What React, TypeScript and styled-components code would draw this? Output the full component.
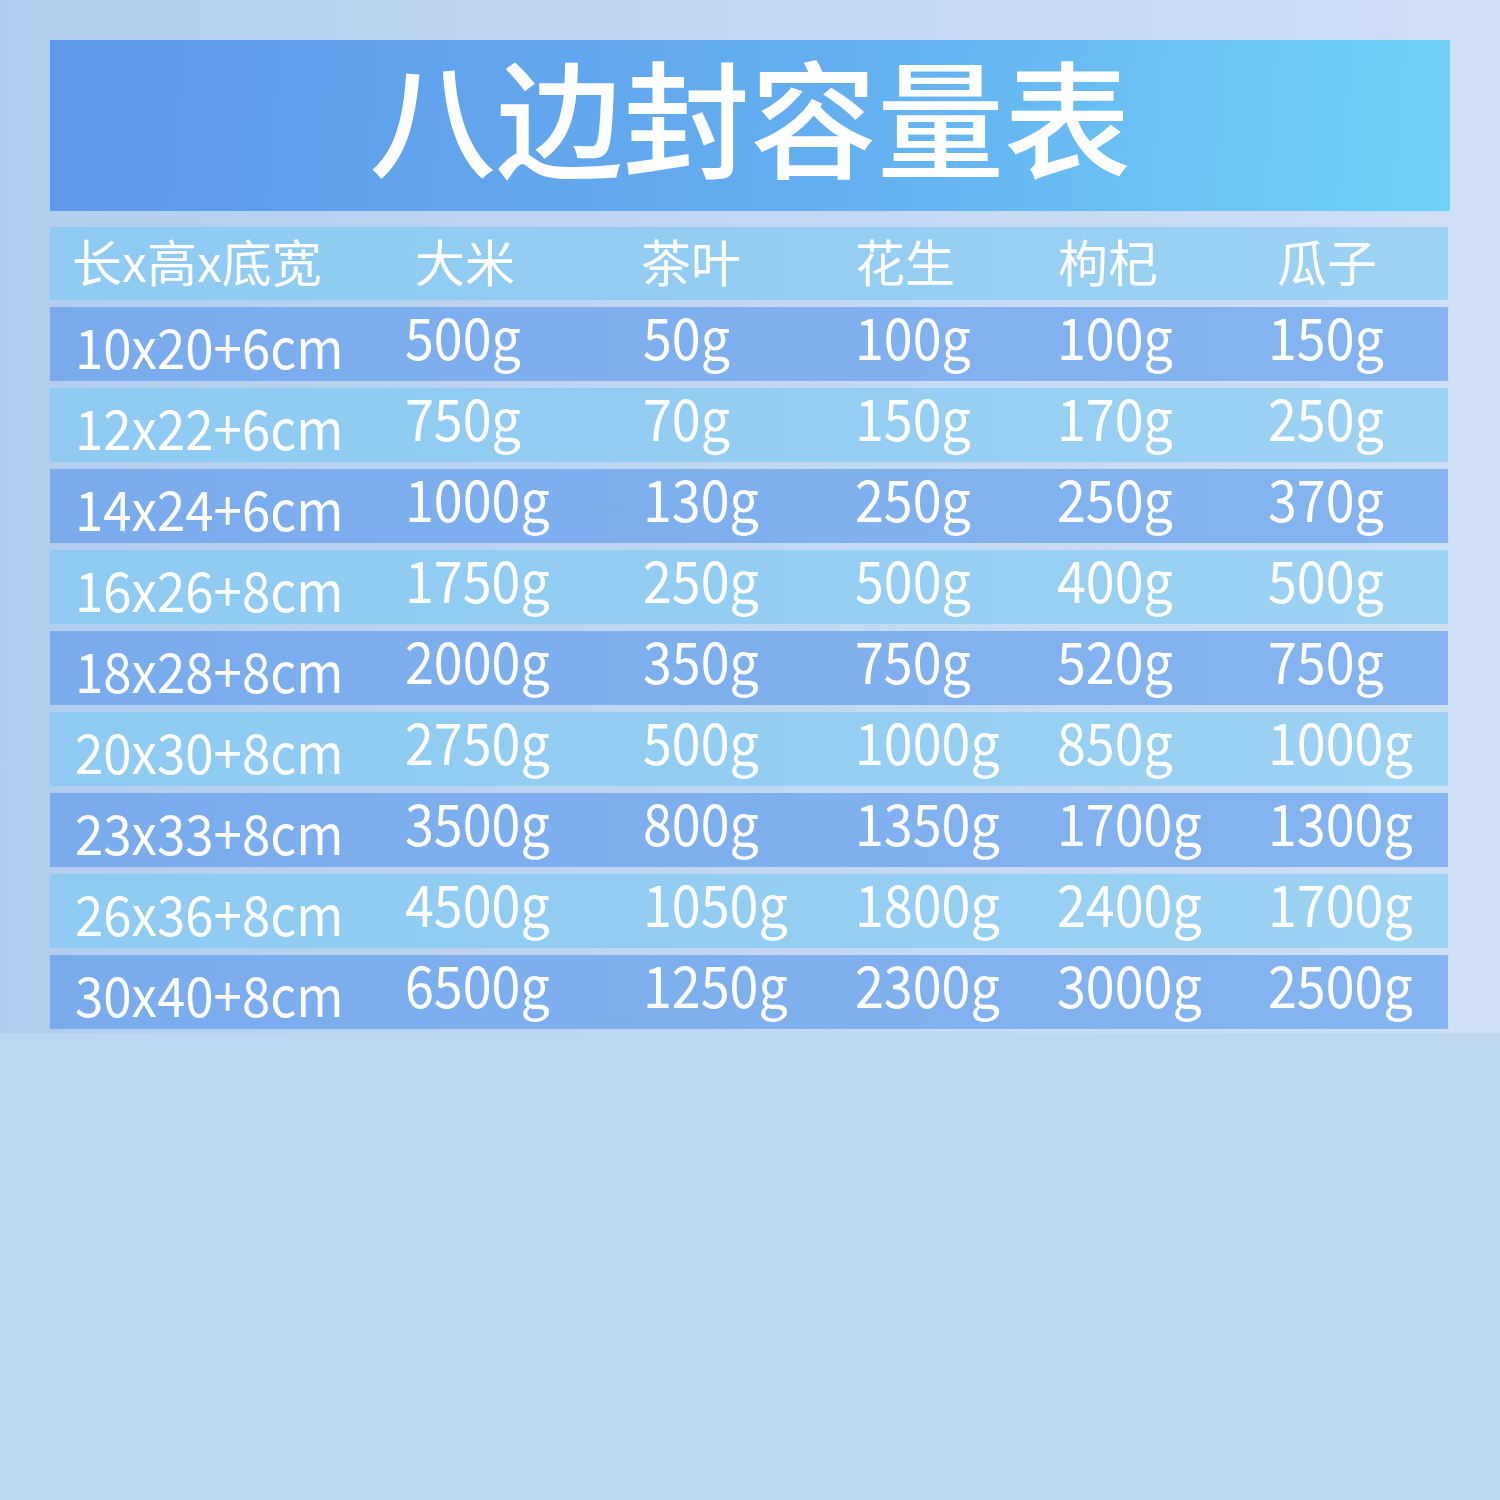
import styled, { createGlobalStyle } from "styled-components";

const GlobalStyle = createGlobalStyle`
  html, body {
    margin: 0;
    padding: 0;
    background: #bdd7f1;
  }
  body {
    font-family: "Noto Sans CJK SC", "Noto Sans", sans-serif;
  }
`;

const sizes = [
  { size: "10x20+6cm", values: ["500g", "50g", "100g", "100g", "150g"] },
  { size: "12x22+6cm", values: ["750g", "70g", "150g", "170g", "250g"] },
  { size: "14x24+6cm", values: ["1000g", "130g", "250g", "250g", "370g"] },
  { size: "16x26+8cm", values: ["1750g", "250g", "500g", "400g", "500g"] },
  { size: "18x28+8cm", values: ["2000g", "350g", "750g", "520g", "750g"] },
  { size: "20x30+8cm", values: ["2750g", "500g", "1000g", "850g", "1000g"] },
  { size: "23x33+8cm", values: ["3500g", "800g", "1350g", "1700g", "1300g"] },
  { size: "26x36+8cm", values: ["4500g", "1050g", "1800g", "2400g", "1700g"] },
  { size: "30x40+8cm", values: ["6500g", "1250g", "2300g", "3000g", "2500g"] }
];

const headings = ["长x高x底宽", "大米", "茶叶", "花生", "枸杞", "瓜子"];

export default function App() {
  return (
    <>
      <GlobalStyle />
      <Page>
        <TopPanel>
          <Banner>
            <Title>八边封容量表</Title>
          </Banner>
          <Table>
            <Row $tone="light" $head>
              {headings.map((h) => (
                <HeadCell key={h}>{h}</HeadCell>
              ))}
            </Row>
            {sizes.map((row, i) => (
              <Row key={row.size} $tone={i % 2 === 0 ? "dark" : "light"}>
                <SizeCell>{row.size}</SizeCell>
                {row.values.map((v, j) => (
                  <ValueCell key={j}>{v}</ValueCell>
                ))}
              </Row>
            ))}
          </Table>
        </TopPanel>
        <Filler />
      </Page>
    </>
  );
}

const Page = styled.div`
  width: 1500px;
  min-height: 1500px;
  display: flex;
  flex-direction: column;
  background: #bdd7f1;
`;

const TopPanel = styled.div`
  height: 1033px;
  box-sizing: border-box;
  padding: 40px 50px 0 50px;
  background: linear-gradient(90deg, #b2cdef 0%, #c1d7f2 50%, #cfe0f6 100%);
  display: flex;
  flex-direction: column;
`;

const Filler = styled.div`
  flex: 1;
  background: linear-gradient(90deg, #bdd6f1 0%, #bed7f1 100%);
`;

const Banner = styled.div`
  height: 171px;
  display: flex;
  align-items: center;
  justify-content: center;
  background: linear-gradient(95deg, #5e98e9 0%, #64aef0 55%, #6fd2f8 100%);
`;

const Title = styled.h1`
  margin: 0;
  font-size: 127px;
  font-weight: 500;
  line-height: 1;
  color: #ffffff;
  transform: translateY(-11px);
`;

const Table = styled.div`
  margin-top: 16px;
  margin-right: 2px;
  display: flex;
  flex-direction: column;
  gap: 7px;
`;

const Row = styled.div<{ $tone: "dark" | "light"; $head?: boolean }>`
  height: ${(p) => (p.$head ? 73 : 74)}px;
  box-sizing: border-box;
  padding-left: ${(p) => (p.$head ? 22 : 25)}px;
  display: grid;
  grid-template-columns: ${(p) =>
    p.$head ? "343px 226px 214px 203px 219px 1fr" : "330px 238px 212px 202px 211px 1fr"};
  align-items: center;
  color: #ffffff;
  background: ${(p) =>
    p.$tone === "dark"
      ? "linear-gradient(90deg, #7aabed 0%, #7fb0ee 50%, #85b5f0 100%)"
      : "linear-gradient(90deg, #8ecaf2 0%, #93cdf2 50%, #9dd3f3 100%)"};
`;

const HeadCell = styled.div`
  font-size: 50px;
  line-height: 1;
  white-space: nowrap;
  transform: translateY(-4px);
`;

const SizeCell = styled.div`
  font-size: 51px;
  line-height: 1;
  white-space: nowrap;
  transform-origin: left center;
  transform: translateY(1px) scaleY(1.08);
`;

const ValueCell = styled.div`
  font-size: 52px;
  line-height: 1;
  white-space: nowrap;
  transform-origin: left center;
  transform: translateY(-8px) scaleY(1.1);
`;
